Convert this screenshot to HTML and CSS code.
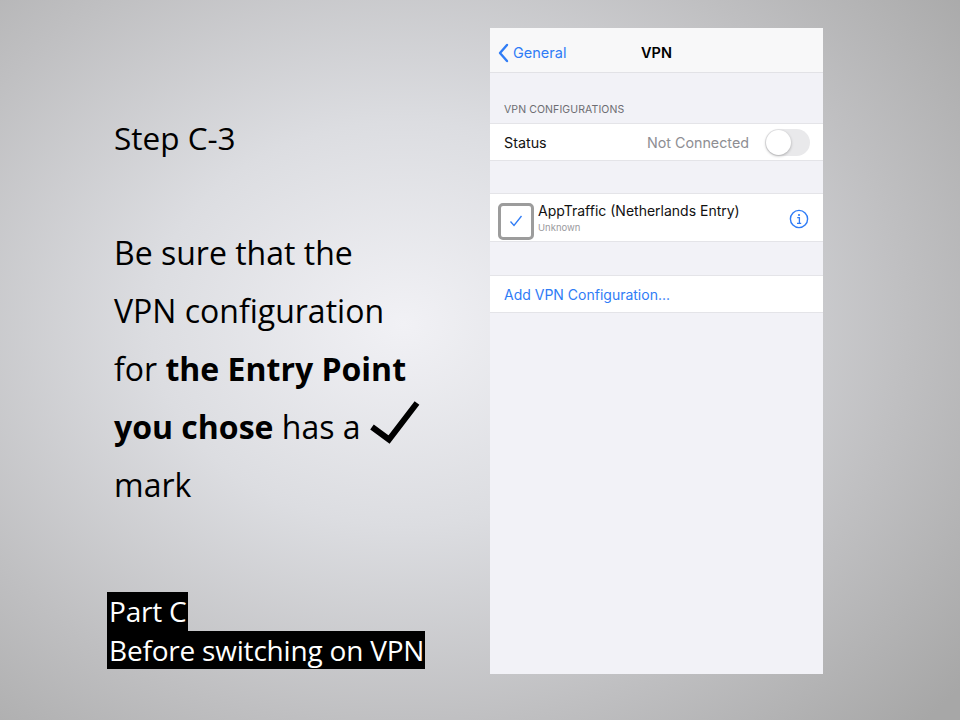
FILE: index.html
```html
<!DOCTYPE html>
<html>
<head>
<meta charset="utf-8">
<link rel="stylesheet" href="styles.css">
</head>
<body>
<div class="slide">
  <div class="left">
    <div class="step">Step C-3</div>
    <div class="body-text">
      <div class="line">Be sure that the</div>
      <div class="line">VPN configuration</div>
      <div class="line">for <b>the Entry Point</b></div>
      <div class="line"><b>you chose</b> has a <svg class="bigcheck" width="52" height="44" viewBox="0 0 52 44"><path d="M3 27 L20 39.5 L48 3" fill="none" stroke="#000" stroke-width="6"/></svg></div>
      <div class="line">mark</div>
    </div>
    <div class="labels">
      <span class="label">Part C</span>
      <span class="label">Before switching on VPN</span>
    </div>
  </div>
  <div class="phone">
    <div class="nav">
      <div class="back">
        <svg width="12" height="20" viewBox="0 0 12 20"><path d="M10 2 L3 10 L10 18" fill="none" stroke="#2f7cf6" stroke-width="2.4" stroke-linecap="round" stroke-linejoin="round"/></svg>
        <span>General</span>
      </div>
      <div class="title">VPN</div>
    </div>
    <div class="section-header">VPN CONFIGURATIONS</div>
    <div class="row status-row">
      <span class="row-label">Status</span>
      <span class="row-value">Not Connected</span>
      <span class="toggle"><span class="knob"></span></span>
    </div>
    <div class="gap"></div>
    <div class="row config-row">
      <span class="checkbox">
        <svg width="14" height="14" viewBox="0 0 14 14"><path d="M1.5 7.5 L5 11.5 L12.5 2" fill="none" stroke="#2f7cf6" stroke-width="1.3"/></svg>
      </span>
      <div class="config-text">
        <div class="config-name">AppTraffic (Netherlands Entry)</div>
        <div class="config-sub">Unknown</div>
      </div>
      <svg class="info" width="20" height="20" viewBox="0 0 20 20"><circle cx="10" cy="10" r="8.6" fill="none" stroke="#2f7cf6" stroke-width="1.4"/><circle cx="10" cy="6" r="1.1" fill="#2f7cf6"/><path d="M8.2 8.7 H10.4 V14.2 M8 14.4 H12.2" fill="none" stroke="#2f7cf6" stroke-width="1.3"/></svg>
    </div>
    <div class="gap gap-2"></div>
    <div class="row add-row">
      <span class="add">Add VPN Configuration...</span>
    </div>
  </div>
</div>
</body>
</html>
```

FILE: styles.css
```css
html, body {
  margin: 0;
  padding: 0;
}
body {
  width: 960px;
  height: 720px;
  overflow: hidden;
  background: radial-gradient(ellipse 75% 80% at 42% 45%, #f1f1f5 0%, #dcdde1 35%, #bfbfc1 70%, #a7a7a7 100%);
}
.slide {
  display: flex;
  height: 720px;
}
.left {
  width: 383px;
  padding-left: 107px;
  display: flex;
  flex-direction: column;
  font-family: "Open Sans", "Noto Sans", sans-serif;
  color: #000;
}
.step {
  margin-top: 116px;
  padding-left: 7px;
  font-size: 31.5px;
  line-height: 44px;
}
.body-text {
  margin-top: 64px;
  padding-left: 7px;
  font-size: 32px;
  line-height: 58px;
  white-space: nowrap;
}
.body-text b {
  font-weight: 700;
}
.bigcheck {
  vertical-align: -5px;
  margin-left: 0;
}
.labels {
  margin-top: 78px;
  display: flex;
  flex-direction: column;
  align-items: flex-start;
}
.label {
  background: #000;
  color: #fff;
  font-family: "Liberation Sans Narrow", "Open Sans", sans-serif;
  font-size: 28px;
  line-height: 38.5px;
  padding: 0 1px 0 2px;
  letter-spacing: -0.2px;
}
.phone {
  margin-top: 28px;
  width: 333px;
  height: 646px;
  background: #f2f2f7;
  font-family: Inter, Roboto, sans-serif;
}
.nav {
  height: 45px;
  box-sizing: border-box;
  padding-top: 5px;
  background: #f8f8f9;
  border-bottom: 1px solid #e2e2e6;
  display: flex;
  align-items: center;
  position: relative;
}
.back {
  display: flex;
  align-items: center;
  padding-left: 7px;
  color: #2f7cf6;
  font-size: 14.5px;
  gap: 4px;
}
.title {
  position: absolute;
  left: 0;
  right: 0;
  text-align: center;
  top: 5px;
  line-height: 40px;
  font-size: 14.5px;
  font-weight: 600;
  color: #000;
  pointer-events: none;
}
.section-header {
  height: 50px;
  box-sizing: border-box;
  padding: 30px 0 0 14px;
  font-size: 10.5px;
  color: #6d6d72;
  letter-spacing: 0.1px;
}
.row {
  background: #fff;
  border-top: 1px solid #e4e4e8;
  border-bottom: 1px solid #e4e4e8;
  display: flex;
  align-items: center;
  box-sizing: border-box;
}
.status-row {
  height: 38px;
  padding: 0 13px 0 14px;
  font-size: 14.3px;
}
.row-label {
  color: #111;
  flex: 1;
}
.row-value {
  color: #8e8e93;
  margin-right: 16px;
}
.toggle {
  width: 45px;
  height: 27px;
  border-radius: 14px;
  background: #e9e9eb;
  position: relative;
  display: inline-block;
}
.knob {
  position: absolute;
  left: 1px;
  top: 1px;
  width: 25px;
  height: 25px;
  border-radius: 50%;
  background: #fff;
  box-shadow: 0 1px 3px rgba(0,0,0,0.28);
}
.gap {
  height: 32px;
}
.gap-2 {
  height: 33px;
}
.config-row {
  height: 49px;
  padding: 0 14px 0 8px;
}
.checkbox {
  width: 36px;
  height: 37px;
  box-sizing: border-box;
  border: 3px solid #9c9c9c;
  border-radius: 5px;
  display: flex;
  align-items: center;
  justify-content: center;
  margin-top: 7px;
  margin-right: 4px;
}
.config-text {
  flex: 1;
  align-self: flex-start;
  padding-top: 7px;
}
.config-name {
  font-size: 14px;
  color: #111;
  line-height: 19px;
}
.config-sub {
  font-size: 9.5px;
  color: #9a9a9e;
  line-height: 15px;
}
.info {
  margin-top: 2px;
}
.add-row {
  height: 38px;
  padding-left: 14px;
}
.add {
  color: #2f7cf6;
  font-size: 14px;
}
```
